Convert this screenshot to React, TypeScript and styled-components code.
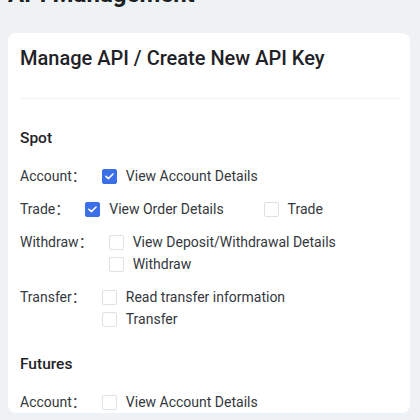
import React, { useState } from 'react';
import styled, { createGlobalStyle } from 'styled-components';

//#region styles
const GlobalStyle = createGlobalStyle`
	html, body {
		margin: 0;
		padding: 0;
		background: #eef2f4;
		font-family: Roboto, "Noto Sans CJK SC", "Liberation Sans", sans-serif;
		overflow: hidden;
	}
`;

const Page = styled.div`
	padding: 0 10px 0 8px;
`;

const PageTitle = styled.h1`
	margin: -20px 0 0 0;
	font-size: 24px;
	line-height: 29px;
	font-weight: 700;
	color: #1c1f23;
`;

const Card = styled.section`
	margin-top: 24px;
	padding: 0 10px 0 12px;
	background: #ffffff;
	border-radius: 8px;
`;

const CardHeader = styled.div`
	padding: 12px 0 27px 0;
	border-bottom: 1px solid #f2f3f5;
`;

const CardTitle = styled.h2`
	margin: 0;
	font-size: 20px;
	line-height: 26px;
	font-weight: 500;
	color: #1f2226;
`;

const Section = styled.div`
	display: flex;
	flex-direction: column;
	gap: 11px;
`;

const SectionTitle = styled.h3<{ $first?: boolean }>`
	margin: ${props => (props.$first ? '29px' : '24px')} 0 17px 0;
	font-size: 15.5px;
	line-height: 20px;
	font-weight: 500;
	color: #1f2226;
`;

const Row = styled.div`
	display: flex;
	align-items: flex-start;
`;

const Label = styled.span`
	font-size: 14px;
	line-height: 22px;
	color: #35383d;
	margin-right: 16px;
	white-space: nowrap;
`;

const Options = styled.div<{ $stack?: boolean }>`
	display: flex;
	flex-direction: ${props => (props.$stack ? 'column' : 'row')};
	column-gap: 40px;
`;

const Option = styled.label`
	display: flex;
	align-items: center;
	gap: 9px;
	height: 22px;
	font-size: 14px;
	color: #35383d;
	cursor: pointer;
	white-space: nowrap;
`;

const Box = styled.span<{ $checked: boolean }>`
	width: 15px;
	height: 15px;
	box-sizing: border-box;
	border-radius: 2px;
	display: flex;
	align-items: center;
	justify-content: center;
	background: ${props => (props.$checked ? '#3a6fe6' : '#ffffff')};
	border: 1px solid ${props => (props.$checked ? '#3a6fe6' : '#dfe1e4')};
`;
//#endregion

type Group = { label: string; options: string[]; stack?: boolean };

const spot: Group[] = [
	{ label: 'Account', options: ['View Account Details'] },
	{ label: 'Trade', options: ['View Order Details', 'Trade'] },
	{ label: 'Withdraw', options: ['View Deposit/Withdrawal Details', 'Withdraw'], stack: true },
	{ label: 'Transfer', options: ['Read transfer information', 'Transfer'], stack: true },
];

const futures: Group[] = [
	{ label: 'Account', options: ['View Account Details'] },
];

function Check({ checked }: { checked: boolean }) {
	return (
		<Box $checked={checked}>
			{checked && (
				<svg width="9" height="7" viewBox="0 0 9 7" fill="none">
					<path d="M1 3.4L3.4 5.6L8 1" stroke="#fff" strokeWidth="1.6" strokeLinecap="round" strokeLinejoin="round" />
				</svg>
			)}
		</Box>
	);
}

export default function App() {
	const [checked, setChecked] = useState<Record<string, boolean>>({
		'spot-Account-View Account Details': true,
		'spot-Trade-View Order Details': true,
	});

	const toggle = (key: string) => setChecked(prev => ({ ...prev, [key]: !prev[key] }));

	const renderGroups = (prefix: string, groups: Group[]) =>
		groups.map(group => (
			<Row key={group.label}>
				<Label>{group.label}：</Label>
				<Options $stack={group.stack}>
					{group.options.map(opt => {
						const key = `${prefix}-${group.label}-${opt}`;
						return (
							<Option key={opt} onClick={() => toggle(key)}>
								<Check checked={!!checked[key]} />
								{opt}
							</Option>
						);
					})}
				</Options>
			</Row>
		));

	return (
		<Page>
			<GlobalStyle />
			<PageTitle>API Management</PageTitle>

			<Card>
				<CardHeader>
					<CardTitle>Manage API / Create New API Key</CardTitle>
				</CardHeader>

				<SectionTitle $first>Spot</SectionTitle>
				<Section>{renderGroups('spot', spot)}</Section>

				<SectionTitle>Futures</SectionTitle>
				<Section>{renderGroups('futures', futures)}</Section>
			</Card>
		</Page>
	);
}
